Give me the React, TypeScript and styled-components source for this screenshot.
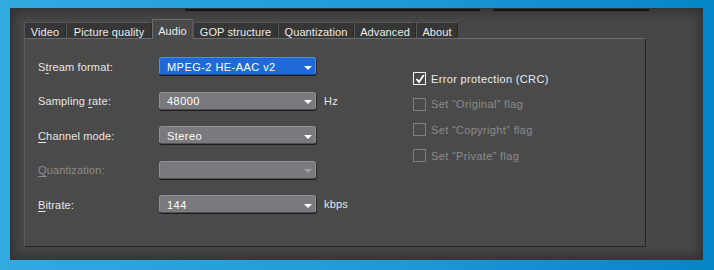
import styled, { createGlobalStyle } from "styled-components";

const Global = createGlobalStyle`
  html, body {
    margin: 0;
    padding: 0;
    height: 270px;
    overflow: hidden;
  }
  body {
    background: linear-gradient(90deg, #30aae1 0%, #1d9ad6 55%, #0584c7 100%);
    font-family: "Liberation Sans", Arial, sans-serif;
  }
`;

const Window = styled.div`
  box-sizing: border-box;
  width: 693px;
  height: 252px;
  margin: 8px 0 0 10px;
  background: #474747;
  box-shadow: inset 0 0 10px 5px rgba(0, 0, 0, 0.28);
  display: flex;
  flex-direction: column;
`;

const TopEdge = styled.div`
  display: flex;
  height: 2px;
  margin-top: 1px;
  padding-left: 175px;
  gap: 13px;
`;

const EdgeLine = styled.div<{ w: number }>`
  width: ${(p) => p.w}px;
  background: #141414;
`;

const TabBar = styled.div`
  display: flex;
  align-items: flex-end;
  height: 19px;
  margin: 8px 0 0 14px;
`;

const Tab = styled.div<{ w: number; active?: boolean }>`
  box-sizing: border-box;
  width: ${(p) => p.w}px;
  height: ${(p) => (p.active ? 20 : 16)}px;
  margin-bottom: ${(p) => (p.active ? -1 : 0)}px;
  display: flex;
  align-items: center;
  justify-content: center;
  padding-top: ${(p) => (p.active ? 3 : 2)}px;
  font-size: 11px;
  letter-spacing: 0.1px;
  color: #ececec;
  background: ${(p) => (p.active ? "#4a4a4a" : "#363636")};
  border: 1px solid ${(p) => (p.active ? "#6e6e6e" : "#585858")};
  border-bottom: none;
  border-right-color: ${(p) => (p.active ? "#5a5a5a" : "#2a2a2a")};
  position: relative;
  z-index: ${(p) => (p.active ? 2 : 1)};
`;

const Page = styled.div`
  box-sizing: border-box;
  width: 622px;
  height: 209px;
  margin-left: 14px;
  background: #4a4a4a;
  border-top: 1px solid #6c6c6c;
  border-left: 1px solid #5c5c5c;
  border-right: 1px solid #262626;
  border-bottom: 1px solid #242424;
  display: flex;
`;

const LeftCol = styled.div`
  box-sizing: border-box;
  width: 388px;
  padding: 18px 0 0 13px;
  display: grid;
  grid-template-columns: 121px 157px auto;
  grid-auto-rows: 18px;
  row-gap: 16.5px;
  align-content: start;
  align-items: center;
`;

const Label = styled.div<{ disabled?: boolean }>`
  font-size: 11px;
  color: ${(p) => (p.disabled ? "#8c8c8c" : "#e6e6e6")};
  letter-spacing: 0.15px;
  padding-top: 1px;
  & u {
    text-decoration-thickness: 1px;
    text-underline-offset: 2px;
  }
`;

const Select = styled.div<{ highlight?: boolean }>`
  box-sizing: border-box;
  height: 18px;
  border-radius: 3px;
  display: flex;
  align-items: center;
  justify-content: space-between;
  padding: 1px 3px 0 7px;
  background: ${(p) => (p.highlight ? "#1f6ad6" : "#7a797d")};
  border: 1px solid ${(p) => (p.highlight ? "#4d8fe6" : "#908f93")};
  border-bottom-color: ${(p) => (p.highlight ? "#1a4a90" : "#505054")};
  box-shadow: 0 1px 0 #1c1c1c, 1px 1px 0 #2c2c2c;
  color: #ffffff;
  font-family: "Liberation Sans", Arial, sans-serif;
  font-size: 11px;
  letter-spacing: 0.45px;
`;

const Arrow = styled.span<{ disabled?: boolean }>`
  width: 0;
  height: 0;
  margin-top: 2px;
  border-left: 4.5px solid transparent;
  border-right: 4.5px solid transparent;
  border-top: 4px solid ${(p) => (p.disabled ? "#a0a0a3" : "#ffffff")};
`;

const Unit = styled.div`
  font-size: 11px;
  color: #e6e6e6;
  padding-left: 8px;
  letter-spacing: 0.2px;
`;

const RightCol = styled.div`
  display: flex;
  flex-direction: column;
  gap: 12.7px;
  padding-top: 33px;
`;

const CheckRow = styled.div<{ disabled?: boolean }>`
  display: flex;
  align-items: center;
  gap: 5px;
  height: 13px;
  font-size: 11px;
  letter-spacing: 0.35px;
  color: ${(p) => (p.disabled ? "#8c8c8c" : "#ececec")};
`;

const Box = styled.div<{ disabled?: boolean }>`
  box-sizing: border-box;
  width: 13px;
  height: 13px;
  border: ${(p) => (p.disabled ? "1px solid #7e7e7e" : "1.5px solid #f2f2f2")};
  display: flex;
  align-items: center;
  justify-content: center;
`;

function Check() {
  return (
    <svg width="10" height="10" viewBox="0 0 10 10">
      <path d="M1.5 5 L4 8 L8.8 1" fill="none" stroke="#ffffff" strokeWidth="1.8" />
    </svg>
  );
}

const tabs = [
  { name: "Video", w: 42 },
  { name: "Picture quality", w: 86 },
  { name: "Audio", w: 41, active: true },
  { name: "GOP structure", w: 85 },
  { name: "Quantization", w: 76 },
  { name: "Advanced", w: 62 },
  { name: "About", w: 42 },
];

export default function App() {
  return (
    <>
      <Global />
      <Window>
        <TopEdge>
          <EdgeLine w={295} />
          <EdgeLine w={156} />
        </TopEdge>
        <TabBar>
          {tabs.map((t) => (
            <Tab key={t.name} w={t.w} active={t.active}>
              {t.name}
            </Tab>
          ))}
        </TabBar>
        <Page>
          <LeftCol>
            <Label>
              S<u>t</u>ream format:
            </Label>
            <Select highlight>
              MPEG-2 HE-AAC v2
              <Arrow />
            </Select>
            <span />

            <Label>
              Sampling <u>r</u>ate:
            </Label>
            <Select>
              48000
              <Arrow />
            </Select>
            <Unit>Hz</Unit>

            <Label>
              <u>C</u>hannel mode:
            </Label>
            <Select>
              Stereo
              <Arrow />
            </Select>
            <span />

            <Label disabled>
              <u>Q</u>uantization:
            </Label>
            <Select>
              <span />
              <Arrow disabled />
            </Select>
            <span />

            <Label>
              <u>B</u>itrate:
            </Label>
            <Select>
              144
              <Arrow />
            </Select>
            <Unit>kbps</Unit>
          </LeftCol>
          <RightCol>
            <CheckRow>
              <Box>
                <Check />
              </Box>
              Error protection (CRC)
            </CheckRow>
            <CheckRow disabled>
              <Box disabled />
              Set “Original” flag
            </CheckRow>
            <CheckRow disabled>
              <Box disabled />
              Set “Copyright” flag
            </CheckRow>
            <CheckRow disabled>
              <Box disabled />
              Set “Private” flag
            </CheckRow>
          </RightCol>
        </Page>
      </Window>
    </>
  );
}
